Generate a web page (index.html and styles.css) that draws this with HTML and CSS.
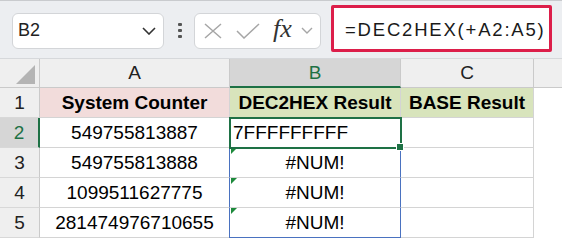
FILE: index.html
```html
<!DOCTYPE html>
<html lang="en">
<head>
    <meta charset="UTF-8">
    <title>DEC2HEX</title>
    <link rel="stylesheet" href="styles.css">
</head>
<body>
    <div class="toolbar">
        <div class="name-box">
            <span>B2</span>
            <svg class="chev" width="14" height="8" viewBox="0 0 14 8"><path d="M1 1 L7 7 L13 1" fill="none" stroke="#333" stroke-width="1.6"/></svg>
        </div>
        <div class="dots"><i></i><i></i><i></i></div>
        <div class="fx-box">
            <svg width="18" height="16" viewBox="0 0 18 16"><path d="M1 1 L17 15 M17 1 L1 15" stroke="#a6a6a6" stroke-width="1.5" fill="none"/></svg>
            <svg width="24" height="16" viewBox="0 0 24 16"><path d="M1 8 L8 15 L23 1" stroke="#a6a6a6" stroke-width="1.5" fill="none"/></svg>
            <span class="fx">fx</span>
            <svg width="12" height="7" viewBox="0 0 12 7"><path d="M1 1 L6 6 L11 1" fill="none" stroke="#a6a6a6" stroke-width="1.4"/></svg>
        </div>
        <div class="formula">=DEC2HEX(+A2:A5)</div>
    </div>

    <div class="sheet">
        <div class="hd corner"><span class="tri"></span></div>
        <div class="hd">A</div>
        <div class="hd sel-col">B</div>
        <div class="hd">C</div>
        <div class="hd last"></div>

        <div class="rh">1</div>
        <div class="cell title pink">System Counter</div>
        <div class="cell title green">DEC2HEX Result</div>
        <div class="cell title green">BASE Result</div>
        <div class="blank"></div>

        <div class="rh sel-row">2</div>
        <div class="cell">549755813887</div>
        <div class="cell active">7FFFFFFFFF<span class="handle"></span></div>
        <div class="cell"></div>
        <div class="blank"></div>

        <div class="rh">3</div>
        <div class="cell">549755813888</div>
        <div class="cell err ref-top">#NUM!</div>
        <div class="cell"></div>
        <div class="blank"></div>

        <div class="rh">4</div>
        <div class="cell">1099511627775</div>
        <div class="cell err ref-mid">#NUM!</div>
        <div class="cell"></div>
        <div class="blank"></div>

        <div class="rh">5</div>
        <div class="cell">281474976710655</div>
        <div class="cell err ref-bot">#NUM!</div>
        <div class="cell"></div>
        <div class="blank"></div>
    </div>
</body>
</html>
```

FILE: styles.css
```css
body {
    margin: 0;
    font-family: 'Liberation Sans', Arial, sans-serif;
    background-color: #ffffff;
    color: #000;
}

.toolbar {
    display: flex;
    align-items: center;
    height: 59px;
    box-sizing: border-box;
    border-top: 1px solid #c9cbce;
    border-bottom: 1px solid #d6d8db;
    background-color: #eceef1;
    padding-left: 12px;
}

.name-box {
    display: flex;
    align-items: center;
    justify-content: space-between;
    width: 152px;
    height: 36px;
    box-sizing: border-box;
    padding: 0 7px 0 5px;
    background-color: #fff;
    border: 1px solid #d3d5d8;
    border-radius: 6px;
    font-size: 18px;
    color: #222;
    margin-top: 2px;
}

.dots {
    display: flex;
    flex-direction: column;
    gap: 3px;
    margin: 2px 12px 0 14px;
}

.dots i {
    display: block;
    width: 4px;
    height: 3px;
    background-color: #555;
    border-radius: 1px;
}

.fx-box {
    display: flex;
    align-items: center;
    width: 127px;
    height: 36px;
    box-sizing: border-box;
    padding-left: 9px;
    gap: 14px;
    background-color: #fff;
    border: 1px solid #d3d5d8;
    border-radius: 6px;
    margin-top: 2px;
}

.fx-box .fx {
    font-family: 'Liberation Serif', serif;
    font-style: italic;
    font-size: 26px;
    color: #333;
    margin-left: -1px;
    margin-right: -5px;
    margin-top: -3px;
}

.formula {
    width: 221px;
    height: 47px;
    box-sizing: border-box;
    margin-left: 10px;
    margin-top: -2px;
    border: 3px solid #dc1e4a;
    border-radius: 2px;
    background-color: #fff;
    padding: 11px 0 0 11px;
    font-size: 18.5px;
    letter-spacing: 1.8px;
    color: #1a1a1a;
}

.sheet {
    display: grid;
    grid-template-columns: 40px 190px 171px 133px 1fr;
    grid-template-rows: 29px repeat(5, 30px);
    font-size: 19px;
}

.hd {
    display: flex;
    align-items: center;
    justify-content: center;
    background-color: #efefef;
    border-right: 1px solid #cacaca;
    border-bottom: 1px solid #cacaca;
    color: #222;
}

.hd.last {
    border-right: none;
}

.corner {
    position: relative;
}

.tri {
    position: absolute;
    right: 4px;
    bottom: 3px;
    width: 0;
    height: 0;
    border-left: 19px solid transparent;
    border-bottom: 19px solid #b4b4b4;
}

.sel-col {
    background-color: #d6d6d6;
    color: #1e7145;
    border-bottom: 2px solid #1e7145;
}

.rh {
    display: flex;
    align-items: center;
    justify-content: center;
    background-color: #efefef;
    border-right: 1px solid #cacaca;
    border-bottom: 1px solid #d8d8d8;
    color: #222;
}

.sel-row {
    background-color: #d6d6d6;
    color: #1e7145;
    border-right: 2px solid #1e7145;
}

.cell {
    position: relative;
    display: flex;
    align-items: center;
    justify-content: center;
    border-right: 1px solid #d4d4d4;
    border-bottom: 1px solid #d4d4d4;
}

.blank {
    background-color: #fff;
}

.title {
    font-weight: bold;
}

.pink {
    background-color: #f2dcdb;
}

.green {
    background-color: #d8e4bc;
}

.active {
    justify-content: flex-start;
    padding-left: 3px;
    outline: 2px solid #1e7145;
    outline-offset: -1px;
    z-index: 2;
}

.handle {
    position: absolute;
    right: -4px;
    bottom: -4px;
    width: 6px;
    height: 6px;
    background-color: #1e7145;
    border: 1px solid #fff;
}

.err::before {
    content: "";
    position: absolute;
    left: 1px;
    top: 0;
    border-top: 6px solid #1e8a3c;
    border-right: 6px solid transparent;
}

.ref-top, .ref-mid, .ref-bot {
    border-left: 1px solid #4a72c0;
    border-right: 1px solid #4a72c0;
    margin-left: -1px;
}

.ref-bot {
    border-bottom: 1px solid #4a72c0;
}
```
